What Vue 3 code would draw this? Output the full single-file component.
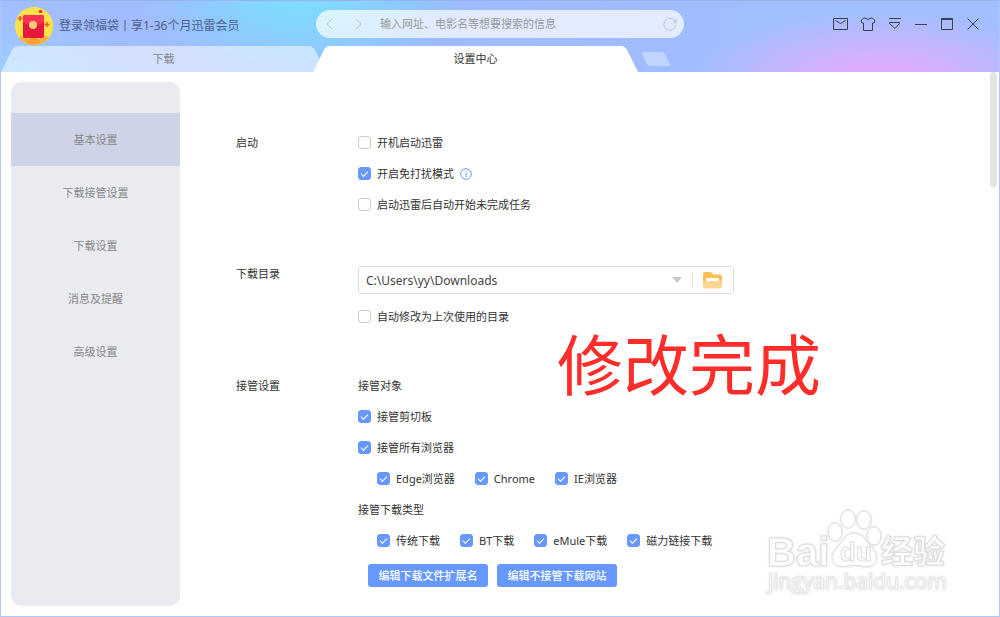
<template>
  <div class="window">
    <header class="header">
      <div class="topbar">
        <a class="user" href="#">
          <svg class="avatar" viewBox="0 0 38 38" aria-hidden="true">
            <defs>
              <clipPath id="avatar-clip"><circle cx="19" cy="19" r="19" /></clipPath>
            </defs>
            <g clip-path="url(#avatar-clip)">
              <rect width="38" height="38" fill="#ffe14a" />
              <circle cx="8" cy="35" r="6" fill="#ffb03a" />
              <circle cx="19" cy="37" r="7" fill="#ffa030" />
              <circle cx="30" cy="35" r="6" fill="#ffb03a" />
            </g>
            <rect x="8" y="8" width="21" height="23" rx="2" fill="#e4193c" />
            <path d="M8 10a2 2 0 0 1 2-2h17a2 2 0 0 1 2 2v5q-10.500 7-21 0z" fill="#fa3350" />
            <circle cx="18" cy="18" r="4" fill="#f8c978" />
            <rect x="24" y="3" width="3" height="3" fill="#f0352f" />
            <path d="M5 9v5M2.500 11.500h5M32 15v5M29.500 17.500h5" stroke="#f2552c" stroke-width="1.500" />
          </svg>
          <span>登录领福袋丨享1-36个月迅雷会员</span>
        </a>
        <form class="search" @submit.prevent>
          <button type="button" class="search-btn" aria-label="后退">
            <svg width="12" height="12" viewBox="0 0 12 12"><path d="M8 1L3 6l5 5" /></svg>
          </button>
          <button type="button" class="search-btn" aria-label="前进">
            <svg width="12" height="12" viewBox="0 0 12 12"><path d="M4 1l5 5-5 5" /></svg>
          </button>
          <input v-model="keyword" type="text" aria-label="搜索" placeholder="输入网址、电影名等想要搜索的信息" />
          <button type="button" class="search-btn" aria-label="刷新">
            <svg width="14" height="14" viewBox="0 0 14 14"><path d="M12.500 5a6 6 0 1 0 .4 3M13.200 2v3.200H10" /></svg>
          </button>
        </form>
        <div class="actions">
          <button type="button" class="wide" aria-label="邮件">
            <svg width="18" height="16" viewBox="0 0 18 16"><path d="M2.500 2.500h14v11h-14zM4.500 4.500l5 3 5-3" /></svg>
          </button>
          <button type="button" class="wide" aria-label="皮肤">
            <svg width="18" height="16" viewBox="0 0 18 16">
              <path d="M6 2q3 3 6 0l2 .5 2 2.500-1 2h-1.500v7.500h-9V7H3L2 5l2-2.500z" />
            </svg>
          </button>
          <button type="button" aria-label="菜单">
            <svg width="16" height="16" viewBox="0 0 16 16"><path d="M2 2.500h12M2.500 6.500h10v1L8 12.500 2.500 7.500z" /></svg>
          </button>
          <button type="button" aria-label="最小化">
            <svg width="16" height="16" viewBox="0 0 16 16"><path d="M2 8.500h12" /></svg>
          </button>
          <button type="button" aria-label="最大化">
            <svg width="16" height="16" viewBox="0 0 16 16"><path d="M2.500 2.500h11v11h-11zM2 3.500h12" /></svg>
          </button>
          <button type="button" aria-label="关闭">
            <svg width="16" height="16" viewBox="0 0 16 16"><path d="M2.500 2.500l11 11M13.500 2.500l-11 11" /></svg>
          </button>
        </div>
      </div>

      <nav class="tabs">
        <a v-for="tab in tabs" :key="tab.label" href="#" class="tab" :class="{ active: tab.active }">
          <svg width="20" height="26" viewBox="0 0 20 26"><path d="M0 26L11 4Q13 0 17 0h3v26z" /></svg>
          <span>{{ tab.label }}</span>
          <svg width="20" height="26" viewBox="0 0 20 26"><path d="M20 26L9 4Q7 0 3 0H0v26z" /></svg>
        </a>
        <button type="button" class="new-tab" aria-label="新建标签">
          <svg width="30" height="14" viewBox="0 0 30 14">
            <path d="M2 0h19q2 0 3 2l5 10q1 2-1 2H9q-2 0-3-2L1 2Q0 0 2 0z" />
          </svg>
        </button>
      </nav>
    </header>

    <div class="body">
      <aside class="sidebar">
        <a v-for="item in menu" :key="item" href="#" :class="{ current: item === current }" @click.prevent="current = item">
          {{ item }}
        </a>
      </aside>

      <main class="content">
        <section class="section">
          <h2>启动</h2>
          <div class="fields">
            <label v-for="item in startup" :key="item.label" class="check">
              <input v-model="item.checked" type="checkbox" />
              <span>{{ item.label }}</span>
              <svg v-if="item.info" class="info" width="12" height="12" viewBox="0 0 12 12">
                <circle cx="6" cy="6" r="5.300" />
                <path d="M6 2.800v1.400M6 5v4.200" />
              </svg>
            </label>
          </div>
        </section>

        <section class="section">
          <h2>下载目录</h2>
          <div class="fields directory">
            <div class="path">
              <select v-model="directory" aria-label="下载目录">
                <option>C:\Users\yy\Downloads</option>
              </select>
              <svg class="arrow" width="10" height="6" viewBox="0 0 10 6"><path d="M0 0h10L5 6z" /></svg>
              <button type="button" aria-label="选择文件夹">
                <svg width="20" height="17" viewBox="0 0 20 17">
                  <path d="M0 2.500Q0 0 2 0h5q1 0 2 1l1 1.500h7q2 0 2 2V14H0z" fill="#fdbe58" />
                  <rect x="3" y="6" width="13" height="5" rx="1" fill="#fff" />
                  <path d="M0 9h19v5.500q0 2-2 2H2q-2 0-2-2z" fill="#ffd690" />
                </svg>
              </button>
            </div>
            <label class="check">
              <input v-model="autoChange" type="checkbox" />
              <span>自动修改为上次使用的目录</span>
            </label>
          </div>
        </section>

        <section class="section">
          <h2>接管设置</h2>
          <div class="fields">
            <h3>接管对象</h3>
            <label v-for="item in targets" :key="item.label" class="check">
              <input v-model="item.checked" type="checkbox" />
              <span>{{ item.label }}</span>
            </label>
            <div class="check-row">
              <label v-for="item in browsers" :key="item.label" class="check">
                <input v-model="item.checked" type="checkbox" />
                <span>{{ item.label }}</span>
              </label>
            </div>
            <h3>接管下载类型</h3>
            <div class="check-row">
              <label v-for="item in types" :key="item.label" class="check">
                <input v-model="item.checked" type="checkbox" />
                <span>{{ item.label }}</span>
              </label>
            </div>
            <div class="buttons">
              <button type="button">编辑下载文件扩展名</button>
              <button type="button">编辑不接管下载网站</button>
            </div>
          </div>
        </section>
      </main>
      <div class="scrollbar"></div>
    </div>

    <p class="note">修改完成</p>

    <svg class="watermark" width="190" height="96" viewBox="0 0 190 96">
      <g class="outline">
        <text x="4" y="61" class="latin">Bai</text>
        <ellipse cx="72" cy="27" rx="7" ry="9" />
        <ellipse cx="85" cy="14" rx="7" ry="9" />
        <ellipse cx="101" cy="15" rx="7" ry="9" />
        <ellipse cx="111" cy="31" rx="7" ry="9" />
        <path d="M91 28Q98 28 102 34L112 46Q116 56 110 60Q106 63 98 61Q91 60 84 61Q76 63 72 59Q66 53 72 45L80 35Q84 28 91 28z" />
        <text x="77" y="56" class="du">du</text>
        <text x="118" y="58" class="cjk">经验</text>
      </g>
      <text x="5" y="84" class="site">jingyan.baidu.com</text>
    </svg>
  </div>
</template>

<script setup>
import { ref } from 'vue'

const keyword = ref('')
const directory = ref('C:\\Users\\yy\\Downloads')
const autoChange = ref(false)
const current = ref('基本设置')

const tabs = [
  { label: '下载', active: false },
  { label: '设置中心', active: true },
]

const menu = ['基本设置', '下载接管设置', '下载设置', '消息及提醒', '高级设置']

const startup = ref([
  { label: '开机启动迅雷', checked: false },
  { label: '开启免打扰模式', checked: true, info: true },
  { label: '启动迅雷后自动开始未完成任务', checked: false },
])

const targets = ref([
  { label: '接管剪切板', checked: true },
  { label: '接管所有浏览器', checked: true },
])

const browsers = ref([
  { label: 'Edge浏览器', checked: true },
  { label: 'Chrome', checked: true },
  { label: 'IE浏览器', checked: true },
])

const types = ref([
  { label: '传统下载', checked: true },
  { label: 'BT下载', checked: true },
  { label: 'eMule下载', checked: true },
  { label: '磁力链接下载', checked: true },
])
</script>

<style>
body {
  margin: 0;
}
</style>

<style scoped>
* {
  box-sizing: border-box;
}

.window {
  position: relative;
  display: flex;
  flex-direction: column;
  min-height: 100vh;
  border: 1px solid #b0c7f6;
  border-top-color: #98b4ea;
  background: #fff;
  color: #333;
  font-family: 'Noto Sans', 'Noto Sans CJK SC', sans-serif;
  font-size: 11px;
  line-height: 21px;
}

a {
  color: inherit;
  text-decoration: none;
}

button {
  padding: 0;
  border: none;
  background: none;
  color: inherit;
  font: inherit;
  cursor: pointer;
}

svg {
  display: block;
  flex: none;
}

/* Header */
.header {
  background:
    radial-gradient(ellipse 190px 72px at 88% 115%, #e8a8fc 0%, #e2acfdcc 35%, #c8b4ff00 100%),
    radial-gradient(ellipse 160px 90px at 30% -10%, #7bdfff 0%, #80d8ffcc 40%, #98c4ff00 100%),
    radial-gradient(ellipse 130px 60px at 0% 110%, #98d2ff 0%, #98c8ff00 100%),
    linear-gradient(90deg, #a2bfff 0%, #a2bcff 20%, #9cbcff 40%, #a0bcff 60%, #a0c0ff 80%, #a2bfff 100%);
}

.topbar {
  display: grid;
  grid-template-columns: 1fr minmax(0, 368px) 1fr;
  align-items: center;
  height: 45px;
}

.user {
  display: flex;
  align-items: center;
  gap: 6px;
  padding: 4px 0 0 14px;
  color: #4f5f8c;
  font-size: 12px;
  white-space: nowrap;
}

.avatar {
  width: 38px;
  height: 38px;
}

.search {
  display: flex;
  align-items: center;
  gap: 16px;
  height: 28px;
  padding: 0 7px 0 8px;
  border-radius: 14px;
  background: rgba(255, 255, 255, 0.7);
}

.search input {
  flex: 1;
  min-width: 0;
  padding: 0;
  border: none;
  outline: none;
  background: none;
  color: #555;
  font: inherit;
}

.search input::placeholder {
  color: #999;
}

.search-btn svg {
  fill: none;
  stroke: #bcc3d2;
}

.actions {
  display: flex;
  justify-content: flex-end;
  gap: 10px;
  padding-right: 18px;
}

.actions button {
  width: 16px;
}

.actions .wide {
  width: 18px;
}

.actions svg {
  fill: none;
  stroke: #3b3f55;
}

.tabs {
  display: flex;
  align-items: flex-end;
  height: 26px;
}

.tab {
  display: flex;
  flex: 0 1 325px;
  height: 26px;
  fill: rgba(255, 255, 255, 0.52);
  color: #888;
  line-height: 26px;
  text-align: center;
}

.tab span {
  flex: 1;
  background: rgba(255, 255, 255, 0.52);
}

.tab + .tab {
  margin-left: -13px;
}

.tab.active {
  z-index: 1;
  fill: #fff;
  color: #333;
}

.tab.active span {
  background: #fff;
}

.new-tab {
  align-self: center;
  margin-left: 3px;
}

.new-tab svg {
  fill: rgba(255, 255, 255, 0.35);
}

/* Body */
.body {
  display: flex;
  flex: 1;
  padding: 0 2px 10px 10px;
}

.sidebar {
  width: 169px;
  margin-top: 10px;
  padding-top: 31px;
  border-radius: 10px;
  background: #eaebf0;
  color: #888;
  text-align: center;
}

.sidebar a {
  display: block;
  line-height: 53px;
}

.sidebar .current {
  background: #ced4e7;
}

.content {
  display: flex;
  flex: 1;
  flex-direction: column;
  gap: 48px;
  padding: 60px 16px 0 56px;
}

.scrollbar {
  width: 7px;
  height: 115px;
  border-radius: 4px;
  background: #e4e4e4;
}

.section {
  display: flex;
}

h2,
h3 {
  margin: 0;
  font-size: 11px;
  font-weight: 400;
}

h2 {
  width: 122px;
}

.fields {
  display: flex;
  flex: 1;
  flex-direction: column;
  align-items: flex-start;
  gap: 10px;
}

.directory {
  gap: 12px;
  padding-top: 3px;
}

.check {
  display: flex;
  align-items: center;
  gap: 6px;
}

.check input {
  display: flex;
  align-items: center;
  justify-content: center;
  width: 13px;
  height: 13px;
  margin: 0;
  border: 1px solid #ccc;
  border-radius: 3px;
  appearance: none;
  background: #fff;
}

.check input:checked {
  border-color: #6798ff;
  background: #6798ff;
}

.check input:checked::after {
  width: 6px;
  height: 3px;
  margin-bottom: 2px;
  border: solid #fff;
  border-width: 0 0 1px 1px;
  content: '';
  transform: rotate(-45deg);
}

.info {
  fill: none;
  stroke: #6798ff;
}

.check-row {
  display: flex;
  gap: 20px;
  padding-left: 19px;
}

.path {
  display: flex;
  align-items: center;
  width: 100%;
  max-width: 376px;
  height: 28px;
  border: 1px solid #ddd;
  border-radius: 3px;
}

.path select {
  flex: 1;
  height: 26px;
  margin-right: -20px;
  padding: 0 24px 0 7px;
  border: none;
  outline: none;
  appearance: none;
  background: none;
  color: #444;
  font: inherit;
  font-size: 12px;
}

.arrow {
  margin-right: 10px;
  fill: #c8c8c8;
  pointer-events: none;
}

.path button {
  padding: 0 10px;
  border-left: 1px solid #ddd;
}

.buttons {
  display: flex;
  gap: 9px;
  padding: 3px 0 0 10px;
}

.buttons button {
  width: 120px;
  height: 23px;
  border-radius: 3px;
  background: #6798ff;
  color: #fff;
  font-weight: 500;
}

/* Overlays */
.note {
  position: absolute;
  top: 317px;
  right: 178px;
  margin: 0;
  color: #ff2d2a;
  font-size: 66px;
  line-height: 92px;
}

.watermark {
  position: absolute;
  right: 46px;
  bottom: 15px;
  filter: drop-shadow(0 0 1px #ddd);
  pointer-events: none;
}

.outline {
  fill: #fff;
  stroke: #ddd;
}

.latin {
  font: bold 40px 'Liberation Sans', sans-serif;
}

.du {
  font: bold 26px 'Liberation Sans', sans-serif;
}

.cjk {
  font: bold 32px 'Noto Sans CJK SC', sans-serif;
}

.site {
  fill: #fff;
  stroke: #e8e8e8;
  font: 500 21px 'Open Sans', sans-serif;
}
</style>
